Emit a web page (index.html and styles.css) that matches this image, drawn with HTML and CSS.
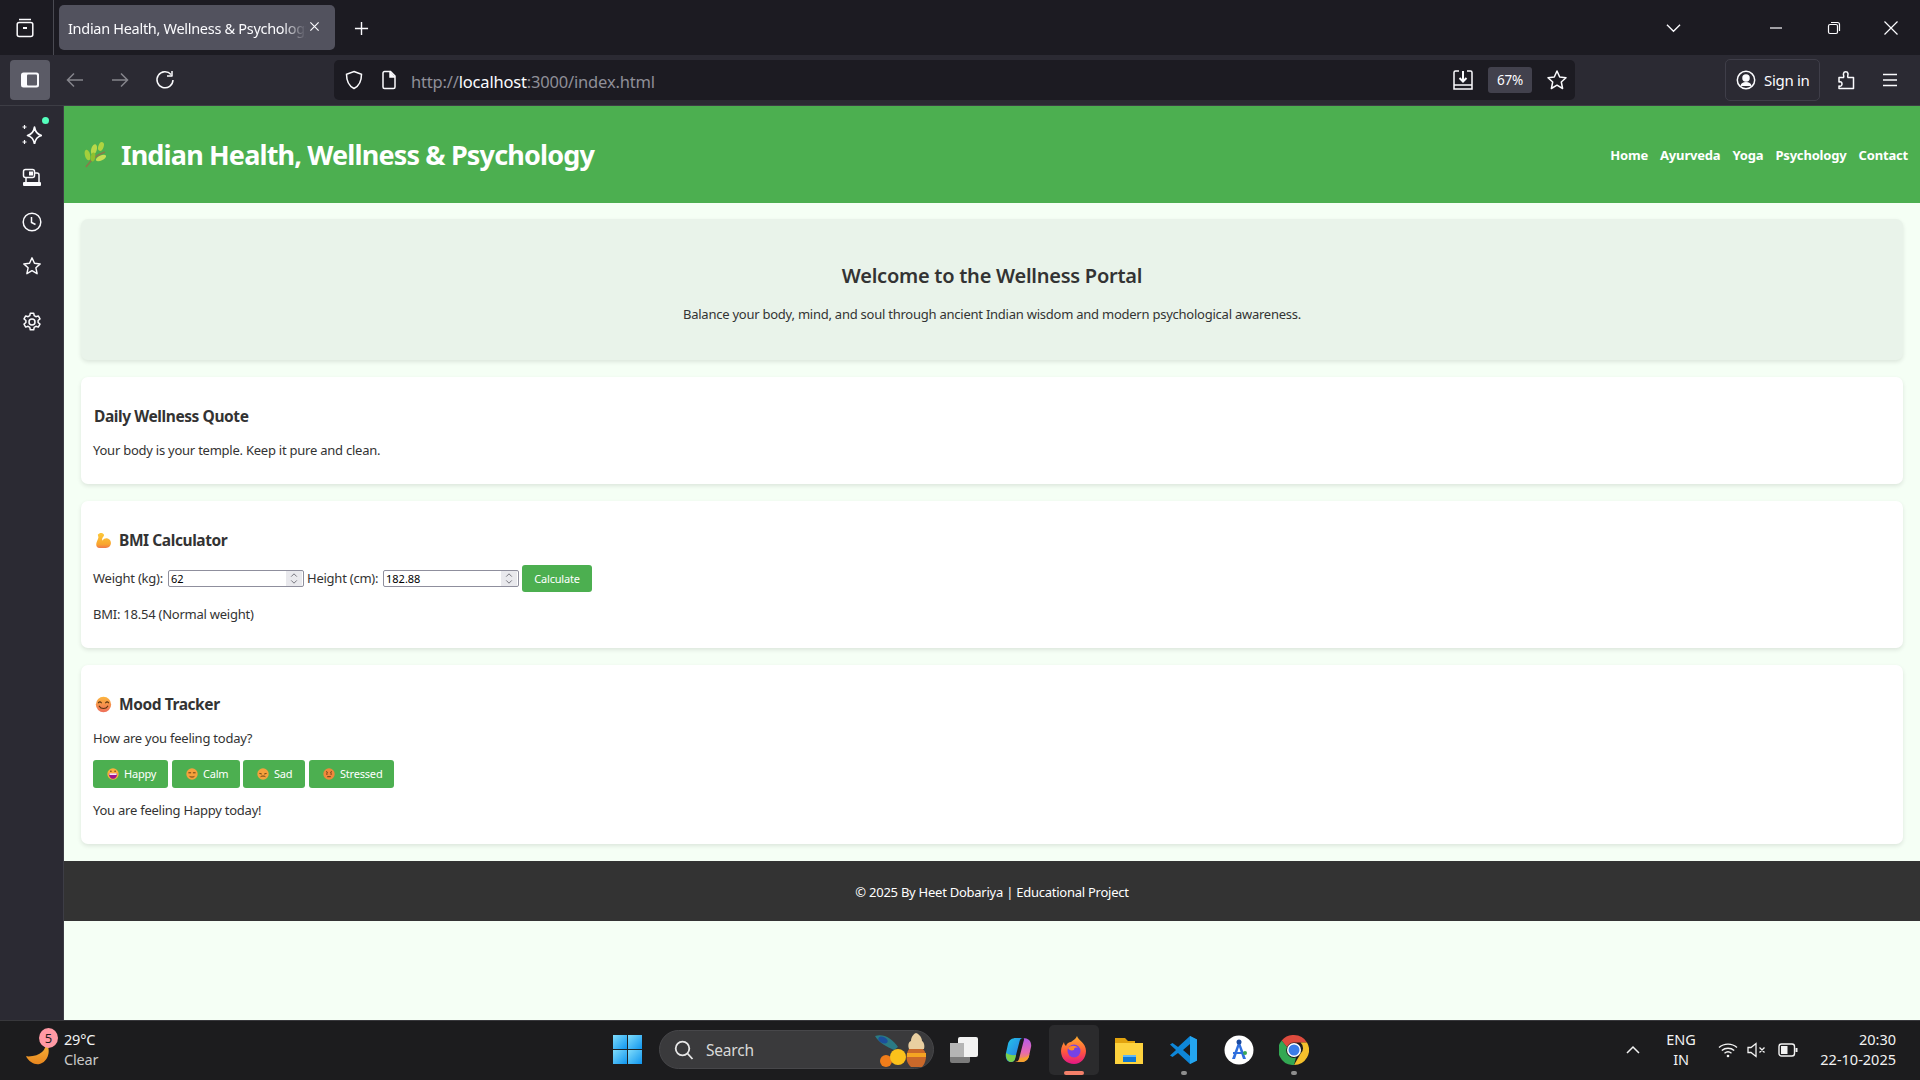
FILE: index.html
```html
<!DOCTYPE html>
<html lang="en">
<head>
<meta charset="utf-8">
<title>Indian Health, Wellness &amp; Psychology</title>
<link rel="stylesheet" href="styles.css">
</head>
<body>
<div class="app">
  <div class="tabbar">
    <div class="tabbar-left">
      <svg class="ico20" viewBox="0 0 20 20" fill="none" stroke="#fbfbfe" stroke-width="1.5"><path d="M4 1.5h12"/><rect x="2.2" y="4.5" width="15.6" height="14" rx="2"/><path d="M8 10h4" stroke-width="2"/></svg>
    </div>
    <div class="tab"><span class="tab-title">Indian Health, Wellness &amp; Psychology</span>
      <svg class="tab-x" viewBox="0 0 12 12" fill="none" stroke="#fbfbfe" stroke-width="1.3"><path d="M1.5 1.5l9 9M10.500 1.500l-9 9"/></svg>
    </div>
    <svg class="newtab" viewBox="0 0 16 16" fill="none" stroke="#fbfbfe" stroke-width="1.5"><path d="M8 1v14M1 8h14"/></svg>
    <div class="tabbar-right">
      <svg class="chev" viewBox="0 0 16 10" fill="none" stroke="#fbfbfe" stroke-width="1.4"><path d="M1 1.500l7 7 7-7"/></svg>
      <svg class="win min" viewBox="0 0 14 14" fill="none" stroke="#fbfbfe" stroke-width="1.2"><path d="M1 7h12"/></svg>
      <svg class="win rest" viewBox="0 0 14 14" fill="none" stroke="#fbfbfe" stroke-width="1.2"><rect x="1.500" y="3.500" width="9" height="9" rx="1.500"/><path d="M4 1.500h6.500a2 2 0 0 1 2 2V10"/></svg>
      <svg class="win close" viewBox="0 0 14 14" fill="none" stroke="#fbfbfe" stroke-width="1.200"><path d="M.5.5l13 13M13.500.5l-13 13"/></svg>
    </div>
  </div>

  <div class="toolbar">
    <div class="side-toggle">
      <svg class="ico20" viewBox="0 0 20 20"><rect x="1" y="2.500" width="18" height="15" rx="2.500" fill="#fbfbfe"/><rect x="7" y="4.500" width="10" height="11" rx="1" fill="#5b5b66"/></svg>
    </div>
    <svg class="nav-ico" viewBox="0 0 20 20" fill="none" stroke="#85858c" stroke-width="1.500"><path d="M18 10H2.500M9 3.500L2.500 10 9 16.500"/></svg>
    <svg class="nav-ico" viewBox="0 0 20 20" fill="none" stroke="#85858c" stroke-width="1.500"><path d="M2 10h15.500M11 3.500l6.500 6.500-6.500 6.500"/></svg>
    <svg class="nav-ico" viewBox="0 0 20 20" fill="none" stroke="#fbfbfe" stroke-width="1.500"><path d="M16 4.500A8 8 0 1 0 18 10"/><path d="M17 1v5h-5" stroke-linejoin="round"/></svg>
    <div class="urlbar">
      <svg class="ico20 shield" viewBox="0 0 20 20" fill="none" stroke="#fbfbfe" stroke-width="1.500"><path d="M10 1.500l7.500 2.700c0 7-2 11.500-7.500 14.300C4.500 15.700 2.500 11.200 2.500 4.200z"/></svg>
      <svg class="ico20 page-ico" viewBox="0 0 20 20" fill="none" stroke="#fbfbfe" stroke-width="1.500"><path d="M4 3a1.500 1.500 0 0 1 1.500-1.500h6L16 6v11a1.500 1.500 0 0 1-1.500 1.500h-9A1.500 1.500 0 0 1 4 17z"/><path d="M11 1.500V7h5" fill="#fbfbfe"/></svg>
      <span class="url"><span class="dim">http://</span>localhost<span class="dim">:3000/index.html</span></span>
      <svg class="ico22 dl" viewBox="0 0 22 22" fill="none" stroke="#fbfbfe" stroke-width="1.500"><path d="M7 2H3.500A1.500 1.500 0 0 0 2 3.500V20h18V3.500A1.500 1.500 0 0 0 18.500 2H15"/><path d="M2 16h18"/><path d="M11 2v10M7.500 9l3.500 3.500L14.500 9" stroke-width="2"/></svg>
      <span class="zoom-chip">67%</span>
      <svg class="ico22 star" viewBox="0 0 22 22" fill="none" stroke="#fbfbfe" stroke-width="1.500" stroke-linejoin="round"><path d="M11 2l2.700 6 6.300.7-4.700 4.300 1.300 6.500L11 16.200 5.400 19.500 6.700 13 2 8.700 8.300 8z"/></svg>
    </div>
    <div class="signin">
      <svg class="ico20" viewBox="0 0 20 20" fill="none" stroke="#fbfbfe" stroke-width="1.500"><circle cx="10" cy="10" r="8.700"/><circle cx="10" cy="8" r="3" fill="#fbfbfe"/><path d="M4.500 16c.5-3 2.500-4 5.500-4s5 1 5.500 4z" fill="#fbfbfe" stroke="none"/></svg>
      <span>Sign in</span>
    </div>
    <svg class="ico20 ext" viewBox="0 0 20 20" fill="none" stroke="#fbfbfe" stroke-width="1.500" stroke-linejoin="round"><path d="M3 10V7.500h4.500c1-1.500-.5-2 0-4 .5-2.500 4-2.500 4.500 0 .3 2-1 2.500 0 4H17.500v11H3v-2.500c2 .5 3-.5 3-2s-1-3-3-2z"/></svg>
    <svg class="ico20 menu" viewBox="0 0 20 20" fill="none" stroke="#fbfbfe" stroke-width="1.500"><path d="M3 4.500h14M3 10h14M3 15.500h14"/></svg>
  </div>

  <div class="body-row">
    <aside class="sidebar">
      <div class="sb-item sb-ai">
        <svg class="ico20" viewBox="0 0 20 20" fill="none" stroke="#fbfbfe" stroke-width="1.600" stroke-linejoin="round"><path d="M12.500 3c.8 5 3 7.500 7 8.500-4 1-6.200 3.500-7 8.500-.8-5-3-7.500-7-8.500 4-1 6.200-3.500 7-8.500z"/><path d="M2.500 1v4M.5 3h4M2.500 16v4M.5 18h4" stroke-width="1.200"/></svg>
        <span class="sb-dot"></span>
      </div>
      <div class="sb-item">
        <svg class="ico20" viewBox="0 0 20 20" fill="none" stroke="#fbfbfe" stroke-width="1.500"><rect x="1.500" y="1.500" width="11" height="8" rx="2"/><rect x="7" y="3.500" width="4" height="4" fill="#fbfbfe" stroke="none"/><path d="M12.500 5h2.500a2 2 0 0 1 2 2v7M4 10v4"/><rect x="1" y="14" width="18" height="4" rx="1" fill="#fbfbfe" stroke="none"/></svg>
      </div>
      <div class="sb-item">
        <svg class="ico20" viewBox="0 0 20 20" fill="none" stroke="#fbfbfe" stroke-width="1.500"><circle cx="10" cy="10" r="8.800"/><path d="M9.500 5v5.500l4 2"/></svg>
      </div>
      <div class="sb-item">
        <svg class="ico20" viewBox="0 0 22 22" fill="none" stroke="#fbfbfe" stroke-width="1.600" stroke-linejoin="round"><path d="M11 2l2.700 6 6.300.7-4.700 4.300 1.300 6.500L11 16.200 5.400 19.500 6.700 13 2 8.700 8.300 8z"/></svg>
      </div>
      <div class="sb-item sb-gear">
        <svg class="ico20" viewBox="0 0 20 20" fill="none" stroke="#fbfbfe" stroke-width="1.500" stroke-linejoin="round"><circle cx="10" cy="10" r="3"/><path d="M8.300 1.200h3.400l.5 2.500 1.700 1 2.400-.8 1.700 3-1.900 1.600v2l1.900 1.600-1.700 3-2.400-.8-1.700 1-.5 2.500H8.300l-.5-2.500-1.700-1-2.400.8-1.700-3 1.900-1.600v-2L2 6.900l1.700-3 2.400.8 1.700-1z"/></svg>
      </div>
    </aside>

    <div class="page">
      <header class="site-header">
        <h1 class="site-title">
          <svg class="herb" viewBox="0 0 24 26"><path d="M3 25C7 19 13 13 22 10" fill="none" stroke="#8a7a4a" stroke-width="1.600"/><ellipse cx="4.500" cy="13" rx="2.600" ry="5.500" fill="#a4cf3c" transform="rotate(-15 4.500 13)"/><ellipse cx="11" cy="7.500" rx="2.800" ry="5.500" fill="#b9d84a" transform="rotate(15 11 7.500)"/><ellipse cx="18" cy="4.500" rx="2.600" ry="4.500" fill="#b0d440" transform="rotate(20 18 4.500)"/><ellipse cx="18" cy="16" rx="5.500" ry="2.400" fill="#c6de55" transform="rotate(-25 18 16)"/><ellipse cx="10" cy="15" rx="2.200" ry="4.500" fill="#8fc02f" transform="rotate(10 10 15)"/></svg>
          <span>Indian Health, Wellness &amp; Psychology</span>
        </h1>
        <nav class="site-nav">
          <a>Home</a><a>Ayurveda</a><a>Yoga</a><a>Psychology</a><a>Contact</a>
        </nav>
      </header>

      <main class="content">
        <section class="hero">
          <h2>Welcome to the Wellness Portal</h2>
          <p>Balance your body, mind, and soul through ancient Indian wisdom and modern psychological awareness.</p>
        </section>

        <section class="card">
          <h3>Daily Wellness Quote</h3>
          <p class="gap13">Your body is your temple. Keep it pure and clean.</p>
        </section>

        <section class="card">
          <h3 class="with-ico">
            <svg class="emoji17" viewBox="0 0 20 20"><defs><linearGradient id="ag" x1="0" y1="0" x2="0" y2="1"><stop offset="0" stop-color="#fdc93a"/><stop offset=".75" stop-color="#f9a62e"/><stop offset="1" stop-color="#f0774a"/></linearGradient></defs><path d="M3.500 3C5 .5 9.500.5 10.500 3c.7 2-1.500 3-2 4.500-.3 1 0 2 .6 2.500 1-2.500 5-3.500 7.500-1.500 3 2.500 2.800 7-.2 9-1.500 1-3 1.300-5 1.300H5.500c-3 0-4.500-2.500-4-5 .5-2.500 2-5 2.500-7.300.2-1.300-1-2.500-.5-4.500z" fill="url(#ag)"/></svg>
            <span>BMI Calculator</span>
          </h3>
          <div class="bmi-row">
            <label class="lab-w">Weight (kg):</label>
            <span class="num"><input type="text" value="62"><span class="spin"><svg viewBox="0 0 8 16" fill="none" stroke="#6f6f78" stroke-width="1"><path d="M1 6l3-3 3 3M1 10l3 3 3-3"/></svg></span></span>
            <label class="lab-h">Height (cm):</label>
            <span class="num"><input type="text" value="182.88"><span class="spin"><svg viewBox="0 0 8 16" fill="none" stroke="#6f6f78" stroke-width="1"><path d="M1 6l3-3 3 3M1 10l3 3 3-3"/></svg></span></span>
            <button class="btn calc">Calculate</button>
          </div>
          <p class="gap12">BMI: 18.54 (Normal weight)</p>
        </section>

        <section class="card">
          <h3 class="with-ico">
            <svg class="emoji17" viewBox="0 0 20 20"><defs><linearGradient id="fg" x1="0" y1="0" x2="0" y2="1"><stop offset="0" stop-color="#fcb53e"/><stop offset="1" stop-color="#ee6f5a"/></linearGradient></defs><circle cx="10" cy="10" r="9" fill="url(#fg)"/><path d="M4 8c1-1.500 2.500-1.500 3.500 0M12.500 8c1-1.500 2.500-1.500 3.500 0M5 12c2 3.500 8 3.500 10 0" fill="none" stroke="#5a3510" stroke-width="1.300" stroke-linecap="round"/></svg>
            <span>Mood Tracker</span>
          </h3>
          <p class="gap13">How are you feeling today?</p>
          <div class="mood-row">
            <button class="btn mood m1"><svg class="emoji11" viewBox="0 0 20 20"><circle cx="10" cy="10" r="9.500" fill="#fbb03b"/><path d="M3 9h14c0 5-3 9-7 9s-7-4-7-9z" fill="#a0158c"/><path d="M4 9h12v2.500H4z" fill="#fff"/><circle cx="6.500" cy="5.500" r="1.200" fill="#5a3510"/><circle cx="13.500" cy="5.500" r="1.200" fill="#5a3510"/></svg>Happy</button>
            <button class="btn mood m2"><svg class="emoji11" viewBox="0 0 20 20"><circle cx="10" cy="10" r="9.500" fill="#f5a13c"/><path d="M4 8h4.500M11.500 8H16M6 14c2 1.500 6 1.500 8 0" fill="none" stroke="#5a3510" stroke-width="1.500"/></svg>Calm</button>
            <button class="btn mood m3"><svg class="emoji11" viewBox="0 0 20 20"><circle cx="10" cy="10" r="9.500" fill="#f5a13c"/><path d="M4 9l4 1M12 10l4-1M6 14.500c2-1.500 6-1.500 8 0" fill="none" stroke="#5a3510" stroke-width="1.500"/></svg>Sad</button>
            <button class="btn mood m4"><svg class="emoji11" viewBox="0 0 20 20"><circle cx="10" cy="10" r="9.500" fill="#f0883c"/><path d="M5 6l3 1.500M15 6l-3 1.500M7 14.500h6" fill="none" stroke="#5a3510" stroke-width="1.500"/><circle cx="6.500" cy="10" r="1.200" fill="#5a3510"/><circle cx="13.500" cy="10" r="1.200" fill="#5a3510"/></svg>Stressed</button>
          </div>
          <p class="gap12">You are feeling Happy today!</p>
        </section>
      </main>

      <footer class="site-footer">© 2025 By Heet Dobariya | Educational Project</footer>
    </div>
  </div>

  <div class="taskbar">
    <div class="tb-left">
      <div class="weather">
        <svg class="moon" viewBox="0 0 30 30"><defs><linearGradient id="mg" x1="0" y1="0" x2="0" y2="1"><stop offset="0" stop-color="#f6b73c"/><stop offset="1" stop-color="#e8861e"/></linearGradient></defs><path d="M21 4c2 9-6 16-20 15 3 6 9 9 14 8 9-2 13-15 6-23z" fill="url(#mg)"/></svg>
        <span class="badge">5</span>
        <div class="weather-text"><span>29°C</span><span class="clear">Clear</span></div>
      </div>
    </div>
    <div class="tb-center">
      <svg class="winlogo" viewBox="0 0 30 30"><defs><linearGradient id="wl" x1="0" y1="0" x2="1" y2="1"><stop offset="0" stop-color="#7fdcfb"/><stop offset="1" stop-color="#0f95ef"/></linearGradient></defs><rect width="14.500" height="14.500" fill="url(#wl)"/><rect x="15.500" width="14.500" height="14.500" fill="url(#wl)"/><rect y="15.500" width="14.500" height="14.500" fill="url(#wl)"/><rect x="15.500" y="15.500" width="14.500" height="14.500" fill="url(#wl)"/></svg>
      <div class="search">
        <svg class="ico20" viewBox="0 0 20 20" fill="none" stroke="#e8e8e8" stroke-width="1.800"><circle cx="8.500" cy="8.500" r="6.800"/><path d="M13.500 13.500l5 5.500"/></svg>
        <span>Search</span>
        <svg class="search-art" viewBox="0 0 54 36"><path d="M1 4c8-3 17 2 23 11l-4 3C13 15 5 11 1 4z" fill="#2a7a84"/><ellipse cx="9" cy="8" rx="5" ry="3" fill="#1c4f9c" transform="rotate(25 9 8)"/><circle cx="12" cy="29" r="6" fill="#f07d1a"/><circle cx="24" cy="25" r="8" fill="#fbc11b"/><path d="M35 17h14c5 5 3 14-1 18H37c-5-4-6-12-2-18z" fill="#c9682a"/><path d="M33 21h19v4H33z" fill="#f4a422"/><path d="M37 9c0-5 4-8 5-8s6 3 6 8c2 1 3 5 2 8H35c-1-3-1-7 2-8z" fill="#e9cfa1"/></svg>
      </div>
      <div class="tb-app taskview">
        <svg viewBox="0 0 30 30"><rect x="1" y="8" width="20" height="20" rx="2" fill="#7b7b7b"/><rect x="9" y="2" width="20" height="20" rx="2" fill="#f2f2f2"/><rect x="1" y="8" width="14" height="14" fill="#b5b5b5"/></svg>
      </div>
      <div class="tb-app">
        <svg viewBox="0 0 30 30"><defs><linearGradient id="c1" x1="0" y1="0" x2="1" y2="1"><stop offset="0" stop-color="#22c8e8"/><stop offset="1" stop-color="#2b6ae0"/></linearGradient><linearGradient id="c2" x1="0" y1="0" x2="0" y2="1"><stop offset="0" stop-color="#b45ae8"/><stop offset=".6" stop-color="#e86ab0"/><stop offset="1" stop-color="#f5a030"/></linearGradient></defs><path d="M12 3h7c-2 0-3 1.500-3.500 3.500L11 24c-.5 2-2 3-4 3-4 0-6-4-5-9l2-9c1-4 4-6 8-6z" fill="url(#c1)"/><path d="M19 3c6 0 9 4 8 9l-2 9c-1 4-4 6-8 6h-6c2 0 3.500-1 4-3l4.500-17.500C20 5 20.500 3 19 3z" fill="url(#c2)"/><path d="M2 18c-.5 5 2 9 5 9 2 0 3.500-1 4-3l1-4c-4 .5-8-.5-10-2z" fill="#7bd04a"/><path d="M14 27h3c4 0 7-2 8-6l.5-2c-2 3-5 4-9 4z" fill="#f5a030"/></svg>
      </div>
      <div class="tb-app active">
        <svg viewBox="0 0 30 30"><defs><linearGradient id="ff" x1="0" y1="0" x2="0" y2="1"><stop offset="0" stop-color="#ffb02e"/><stop offset=".55" stop-color="#ff5a3c"/><stop offset="1" stop-color="#e31587"/></linearGradient></defs><path d="M18 1c1 4 9 7 9 15 0 7-5 13-12 13S2 24 2 16c0-4 2-7 3-9 0 2 1 3 2 4 1-3 3-4 5-4 2-2 5-3 6-6z" fill="url(#ff)"/><circle cx="15" cy="16" r="6.500" fill="#7542e5"/><path d="M9 13c3-3 8-3 10 0-3-1-4 0-4 2-3 1-5 0-6-2z" fill="#ff8a2c"/></svg>
        <span class="run run-active"></span>
      </div>
      <div class="tb-app">
        <svg viewBox="0 0 30 30"><path d="M1 3h10l3 3h7v5H1z" fill="#e2a30e"/><path d="M1 8h28v21H1z" fill="#fdd23e"/><rect x="9" y="20" width="13" height="7" fill="#0f78d4"/><rect x="9" y="20" width="13" height="2" fill="#5fb8f5"/></svg>
      </div>
      <div class="tb-app">
        <svg viewBox="0 0 30 30"><path d="M21 1l7 3.500v21L21 29 9 18l-5.500 4L1 20.500 7 15 1 9.500 3.500 8 9 12zm0 8l-7 6 7 6z" fill="#0e86d8"/><path d="M21 1l7 3.500v21L21 29z" fill="#24a5ef"/></svg>
        <span class="run"></span>
      </div>
      <div class="tb-app">
        <svg viewBox="0 0 30 30"><circle cx="15" cy="15" r="14.500" fill="#fff"/><path d="M15 5l7 19h-3l-4-12-4 12H8z" fill="#2f6fde"/><path d="M9 17h12v2H9z" fill="#2f6fde"/><circle cx="15" cy="7" r="2.500" fill="#1a4aa0"/><circle cx="21" cy="18" r="2" fill="#3aa757"/></svg>
      </div>
      <div class="tb-app">
        <svg viewBox="0 0 30 30"><path d="M15 0a15 15 0 0 1 13 7.500H15a7.500 7.500 0 0 0-7 4.700L2.700 5.500A15 15 0 0 1 15 0z" fill="#dd4b3e"/><path d="M28 7.500A15 15 0 0 1 15 30l6.500-11.200a7.500 7.500 0 0 0 0-11.300z" fill="#f5c02c"/><path d="M2.700 5.500L8 12.200a7.500 7.500 0 0 0 9 10.400L15 30A15 15 0 0 1 2.700 5.500z" fill="#33a853"/><circle cx="15" cy="15" r="7" fill="#fff"/><circle cx="15" cy="15" r="5.500" fill="#3a7de8"/></svg>
        <span class="run"></span>
      </div>
    </div>
    <div class="tb-right">
      <svg class="tray-chev" viewBox="0 0 14 9" fill="none" stroke="#f2f2f2" stroke-width="1.500"><path d="M1 8l6-6 6 6"/></svg>
      <div class="lang"><span>ENG</span><span>IN</span></div>
      <svg class="tray wifi" viewBox="0 0 20 16" fill="none" stroke="#f2f2f2" stroke-width="1.400"><path d="M1 5.500c5-4.500 13-4.500 18 0M3.800 8.500c3.500-3 9-3 12.400 0M6.500 11.200c2-1.600 5-1.600 7 0"/><circle cx="10" cy="14" r="1.300" fill="#f2f2f2" stroke="none"/></svg>
      <svg class="tray mute" viewBox="0 0 20 16" fill="none" stroke="#f2f2f2" stroke-width="1.300"><path d="M1 5.500h3L9 1.500v13l-5-4H1zM12.500 5.500l5 5M17.500 5.500l-5 5"/></svg>
      <svg class="tray batt" viewBox="0 0 20 16" fill="none" stroke="#f2f2f2" stroke-width="1.400"><rect x="1" y="2" width="15.500" height="12" rx="2.500"/><rect x="3" y="4" width="6.500" height="8" fill="#f2f2f2" stroke="none"/><path d="M18.500 6v4" stroke-width="2"/></svg>
      <div class="clock"><span>20:30</span><span>22-10-2025</span></div>
    </div>
  </div>
</div>
</body>
</html>
```

FILE: styles.css
```css
* { box-sizing: border-box; }
html, body { margin: 0; height: 100%; }
body { font-family: "Noto Sans", "Open Sans", sans-serif; background: #1c1b22; overflow: hidden; }
h1, h2, h3, p { margin: 0; }
svg { display: block; flex: none; }
.ico20 { width: 20px; height: 20px; }
.ico22 { width: 22px; height: 22px; }

.app { display: grid; grid-template-rows: 55px 51px 914px 60px; width: 1920px; height: 1080px; }

/* tab strip */
.tabbar { background: #1c1b22; display: flex; align-items: center; }
.tabbar-left { width: 54px; height: 55px; display: flex; align-items: center; padding-left: 15px; border-right: 1px solid #4a4a52; margin-right: 5px; }
.tab { width: 276px; height: 45px; background: #52525e; border-radius: 5px; display: flex; align-items: center; padding-left: 9px; color: #fbfbfe; font-size: 14.5px; letter-spacing: -.3px; }
.tab-title { width: 238px; overflow: hidden; white-space: nowrap; -webkit-mask-image: linear-gradient(90deg, #000 90%, transparent); mask-image: linear-gradient(90deg, #000 90%, transparent); }
.tab-x { width: 11px; height: 11px; margin-left: 3px; margin-top: -3px; }
.newtab { width: 15px; height: 15px; margin-left: 19px; margin-top: 1px; }
.tabbar-right { margin-left: auto; display: flex; align-items: center; padding-right: 22px; }
.chev { width: 15px; height: 10px; margin-right: 88px; }
.win { width: 14px; height: 14px; }
.min { margin-right: 44px; }
.rest { margin-right: 43px; }

/* toolbar */
.toolbar { background: #2b2a33; display: flex; align-items: center; padding-bottom: 1px; border-bottom: 1px solid #3d3d45; }
.side-toggle { width: 40px; height: 40px; margin-left: 10px; background: #5b5b66; border-radius: 4px; display: flex; align-items: center; justify-content: center; }
.nav-ico { width: 20px; height: 20px; margin-left: 25px; }
.side-toggle + .nav-ico { margin-left: 15px; }
.urlbar { width: 1241px; height: 40px; margin-left: 159px; background: #1c1b22; border-radius: 5px; display: flex; align-items: center; padding-left: 10px; }
.page-ico { margin-left: 15px; }
.url { margin-left: 12px; font-size: 16.5px; letter-spacing: -.18px; color: #fbfbfe; white-space: nowrap; width: 1041px; padding-top: 3px; flex: none; }
.dim { color: #8f8f98; }
.zoom-chip { width: 44px; height: 26px; margin-left: 14px; background: #42414d; border-radius: 3px; color: #fbfbfe; font-size: 13.500px; display: flex; align-items: center; justify-content: center; letter-spacing: -.3px; flex: none; }
.star { margin-left: 14px; }
.signin { width: 95px; height: 42px; margin-left: 150px; border: 1px solid #3f3e49; border-radius: 5px; display: flex; align-items: center; padding-left: 10px; gap: 8px; color: #fbfbfe; font-size: 15px; letter-spacing: -.3px; flex: none; }
.ext { margin-left: 16px; }
.menu { margin-left: 24px; }

/* body */
.body-row { display: grid; grid-template-columns: 64px 1856px; min-height: 0; }
.sidebar { background: #2b2a33; display: flex; flex-direction: column; align-items: center; padding-top: 6px; }
.sb-item { height: 44px; display: flex; align-items: center; justify-content: center; position: relative; }
.sb-gear { margin-top: 12px; }
.sb-dot { position: absolute; top: 5px; right: -7px; width: 7px; height: 7px; border-radius: 50%; background: #54ffbd; }

.page { background: #f5fff5; color: #333; border-left: 1px solid #3d3d45; margin-left: -1px; }
.site-header { height: 97px; background: #4caf50; display: flex; align-items: center; justify-content: space-between; padding: 0 12px 0 19px; color: #fff; }
.site-title { display: flex; align-items: center; gap: 14px; font-size: 27px; font-weight: 700; letter-spacing: -.84px; line-height: 36px; }
.herb { width: 24px; height: 26px; margin-top: 1px; }
.site-nav { display: flex; gap: 12px; font-size: 13px; font-weight: 700; letter-spacing: -.18px; }

.content { padding: 16px 17px 0; display: flex; flex-direction: column; gap: 17px; font-size: 13px; line-height: 20px; letter-spacing: -.24px; }
.hero { height: 141px; background: #e9f3ea; border-radius: 7px; box-shadow: 0 2px 4px rgba(0,0,0,.1); text-align: center; padding-top: 43px; }
.hero h2 { font-size: 20px; font-weight: 600; line-height: 28px; letter-spacing: -.25px; margin-bottom: 14px; }
.card { background: #fff; border-radius: 7px; box-shadow: 0 2px 4px rgba(0,0,0,.1); padding: 28px 12px 24px; }
.card h3 { font-size: 15.500px; font-weight: 700; line-height: 22px; letter-spacing: -.42px; padding-left: 1px; }
.with-ico { display: flex; align-items: center; gap: 7px; padding-left: 2px; }
.card h3.with-ico { padding-left: 2px; }
.emoji17 { width: 17px; height: 17px; }
.emoji11 { width: 12px; height: 12px; }
.gap12 { margin-top: 12px; }
.gap13 { margin-top: 13px; }

.bmi-row { display: flex; align-items: center; margin-top: 14px; height: 27px; }
.lab-w { width: 72px; white-space: nowrap; padding-bottom: 2px; }
.lab-h { width: 73px; white-space: nowrap; padding-bottom: 2px; }
.num { display: flex; width: 136px; height: 17px; border: 1px solid #8f8f9d; border-radius: 2px; background: #fff; margin: 0 3px; }
.num input { border: 0; outline: 0; padding: 0 2px; width: 117px; height: 15px; font: 11px/15px "Noto Sans", sans-serif; color: #000; background: transparent; }
.spin { width: 16px; height: 15px; background: #e9e9ed; display: flex; align-items: center; justify-content: center; }
.spin svg { width: 8px; height: 15px; }
.btn { border: 0; background: #4caf50; color: #fff; border-radius: 3px; font-family: inherit; font-size: 11px; letter-spacing: -.2px; padding: 0; display: flex; align-items: center; justify-content: center; }
.calc { width: 70px; height: 27px; }
.mood-row { display: flex; height: 28px; margin-top: 12px; }
.mood { height: 28px; gap: 5px; justify-content: flex-start; padding: 0 0 2px 14px; }
.mood svg { margin-top: 1px; }
.m1 { width: 75px; margin-right: 4px; }
.m2 { width: 68px; margin-right: 3px; }
.m3 { width: 62px; margin-right: 4px; }
.m4 { width: 85px; }

.site-footer { height: 60px; margin-top: 17px; padding-top: 1px; background: #333; color: #fff; font-size: 13px; letter-spacing: -.25px; display: flex; align-items: center; justify-content: center; }

/* taskbar */
.taskbar { background: #1c1c1e; border-top: 1px solid #38383c; padding-bottom: 2px; display: grid; grid-template-columns: 613px 1fr auto; align-items: center; color: #f2f2f2; font-size: 14.5px; }
.weather { position: relative; display: flex; align-items: center; height: 57px; padding-left: 25px; }
.moon { width: 29px; height: 29px; margin-top: 6px; }
.badge { position: absolute; left: 39px; top: 7px; width: 19px; height: 20px; border-radius: 50%; background: #ff99a4; color: #1c1c1e; font-size: 13px; display: flex; align-items: center; justify-content: center; }
.weather-text { display: flex; flex-direction: column; margin-left: 10px; margin-top: -2px; line-height: 20px; letter-spacing: -.2px; }
.clear { color: #c8c8c8; }
.tb-center { display: flex; align-items: center; }
.winlogo { width: 29px; height: 29px; }
.search { width: 275px; height: 39px; margin-left: 17px; border-radius: 20px; background: #3a3a3c; border: 1px solid #47474a; display: flex; align-items: center; padding-left: 14px; gap: 12px; font-size: 15.500px; letter-spacing: -.2px; color: #d8d8d8; position: relative; }
.search-art { position: absolute; right: 5px; top: 1px; width: 54px; height: 36px; }
.tb-app { width: 50px; height: 50px; margin-left: 5px; display: flex; align-items: center; justify-content: center; position: relative; border-radius: 5px; }
.tb-app svg { width: 30px; height: 30px; }
.tb-app.active { background: #2b2b2d; }
.run { position: absolute; bottom: 0; left: 22px; width: 6px; height: 4px; border-radius: 2px; background: #8e8e8e; }
.run-active { left: 15px; width: 20px; background: #f4806a; }
.tb-right { display: flex; align-items: center; padding-right: 24px; }
.tray-chev { width: 14px; height: 9px; margin-right: 21px; }
.lang { display: flex; flex-direction: column; align-items: center; line-height: 20px; letter-spacing: -.1px; width: 40px; margin-right: 17px; margin-top: -1px; }
.tray { width: 20px; height: 16px; margin-right: 9px; }
.mute { margin-right: 11px; }
.clock { display: flex; flex-direction: column; align-items: flex-end; line-height: 20px; letter-spacing: 0; margin-left: 9px; margin-top: -1px; width: 80px; white-space: nowrap; }
```
